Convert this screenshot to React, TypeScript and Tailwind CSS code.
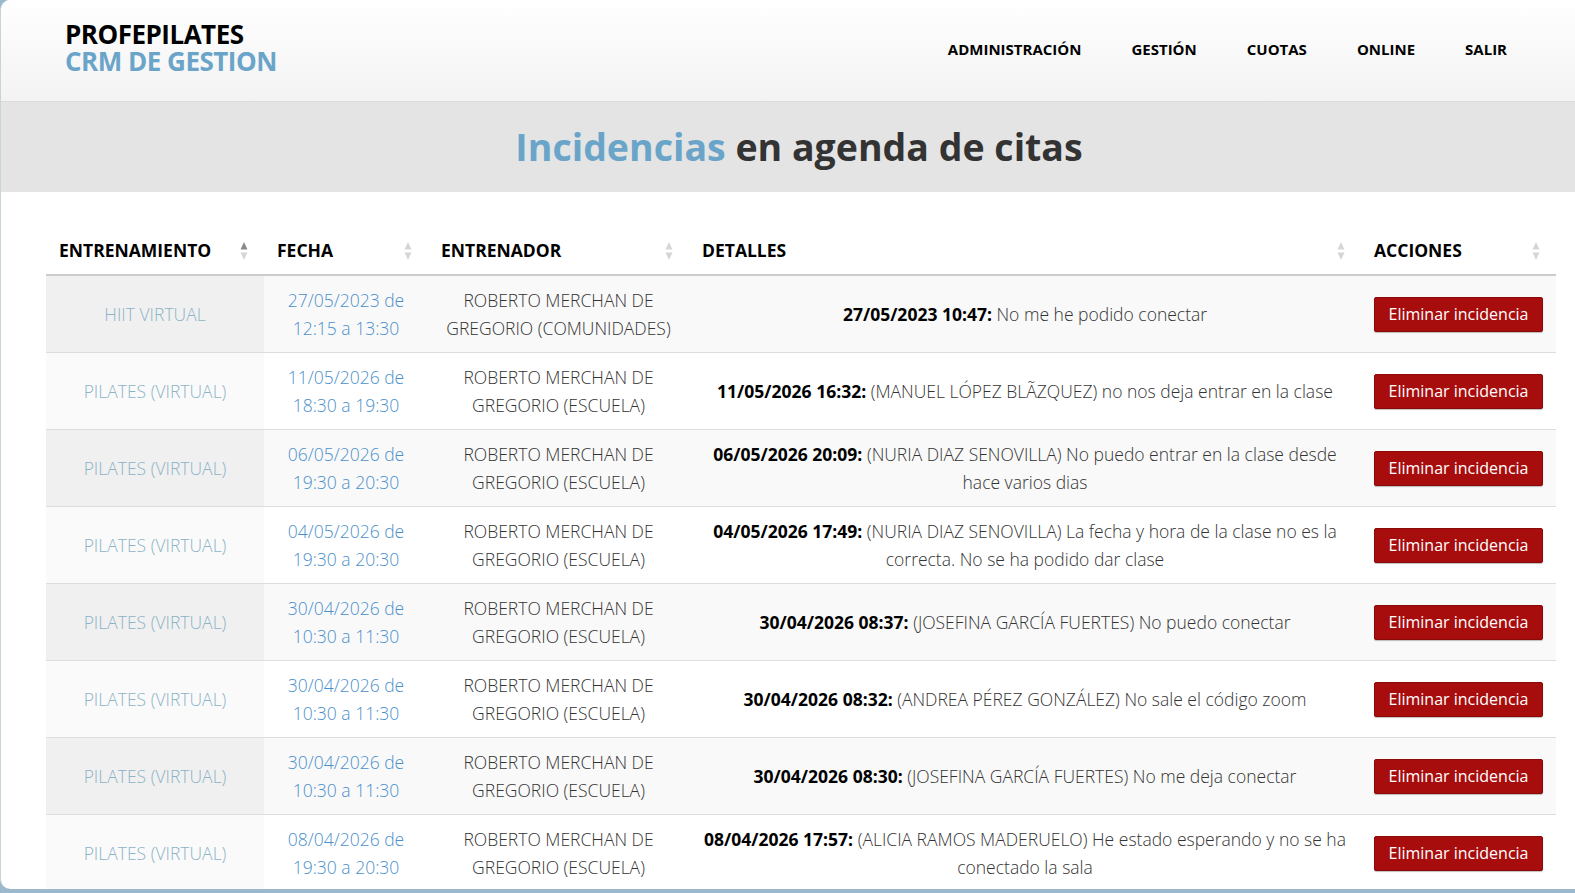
import { Fragment } from "react";

type Incidencia = {
  clase: string;
  fecha: string;
  horario: string;
  entrenador: string;
  registro: string;
  texto: string;
};

const incidencias: Incidencia[] = [
  {
    clase: "HIIT VIRTUAL",
    fecha: "27/05/2023 de",
    horario: "12:15 a 13:30",
    entrenador: "ROBERTO MERCHAN DE GREGORIO (COMUNIDADES)",
    registro: "27/05/2023 10:47:",
    texto: "No me he podido conectar",
  },
  {
    clase: "PILATES (VIRTUAL)",
    fecha: "11/05/2026 de",
    horario: "18:30 a 19:30",
    entrenador: "ROBERTO MERCHAN DE GREGORIO (ESCUELA)",
    registro: "11/05/2026 16:32:",
    texto: "(MANUEL LÓPEZ BLÃZQUEZ) no nos deja entrar en la clase",
  },
  {
    clase: "PILATES (VIRTUAL)",
    fecha: "06/05/2026 de",
    horario: "19:30 a 20:30",
    entrenador: "ROBERTO MERCHAN DE GREGORIO (ESCUELA)",
    registro: "06/05/2026 20:09:",
    texto: "(NURIA DIAZ SENOVILLA) No puedo entrar en la clase desde hace varios dias",
  },
  {
    clase: "PILATES (VIRTUAL)",
    fecha: "04/05/2026 de",
    horario: "19:30 a 20:30",
    entrenador: "ROBERTO MERCHAN DE GREGORIO (ESCUELA)",
    registro: "04/05/2026 17:49:",
    texto:
      "(NURIA DIAZ SENOVILLA) La fecha y hora de la clase no es la correcta. No se ha podido dar clase",
  },
  {
    clase: "PILATES (VIRTUAL)",
    fecha: "30/04/2026 de",
    horario: "10:30 a 11:30",
    entrenador: "ROBERTO MERCHAN DE GREGORIO (ESCUELA)",
    registro: "30/04/2026 08:37:",
    texto: "(JOSEFINA GARCÍA FUERTES) No puedo conectar",
  },
  {
    clase: "PILATES (VIRTUAL)",
    fecha: "30/04/2026 de",
    horario: "10:30 a 11:30",
    entrenador: "ROBERTO MERCHAN DE GREGORIO (ESCUELA)",
    registro: "30/04/2026 08:32:",
    texto: "(ANDREA PÉREZ GONZÁLEZ) No sale el código zoom",
  },
  {
    clase: "PILATES (VIRTUAL)",
    fecha: "30/04/2026 de",
    horario: "10:30 a 11:30",
    entrenador: "ROBERTO MERCHAN DE GREGORIO (ESCUELA)",
    registro: "30/04/2026 08:30:",
    texto: "(JOSEFINA GARCÍA FUERTES) No me deja conectar",
  },
  {
    clase: "PILATES (VIRTUAL)",
    fecha: "08/04/2026 de",
    horario: "19:30 a 20:30",
    entrenador: "ROBERTO MERCHAN DE GREGORIO (ESCUELA)",
    registro: "08/04/2026 17:57:",
    texto: "(ALICIA RAMOS MADERUELO) He estado esperando y no se ha conectado la sala",
  },
];

const menu = ["ADMINISTRACIÓN", "GESTIÓN", "CUOTAS", "ONLINE", "SALIR"];

function SortIcon({ active = false }: { active?: boolean }) {
  return (
    <svg width="8" height="20" viewBox="0 0 8 20" className="shrink-0">
      <path d="M4 1 L7.5 8.5 L0.5 8.5 Z" fill={active ? "#8a8a8a" : "#d6d6d6"} />
      <path d="M4 19 L7.5 11.5 L0.5 11.5 Z" fill="#d6d6d6" />
    </svg>
  );
}

function HeaderCell({ label, active }: { label: string; active?: boolean }) {
  return (
    <div className="flex items-center justify-between pl-[13px] pr-[16px]">
      <span className="text-[17.5px] font-bold text-black">{label}</span>
      <SortIcon active={active} />
    </div>
  );
}

export default function App() {
  return (
    <div className="h-[893px] w-[1575px] overflow-hidden bg-[#9bb8cd] font-['Open_Sans',sans-serif]">
      <div className="h-[889px] overflow-hidden rounded-l-[10px] border-l border-[#c9d3da] bg-white">
        {/* cabecera */}
        <header className="flex h-[102px] items-center justify-between border-b border-[#dcdcdc] bg-gradient-to-b from-white to-[#f3f3f3] pl-[64px] pr-[68px]">
          <div className="mb-[5px] flex flex-col text-[26px] font-bold leading-[27px] tracking-[-0.5px]">
            <span className="block h-[27px] text-black">PROFEPILATES</span>
            <span className="block h-[27px] text-[#6aa5c9]">CRM DE GESTION</span>
          </div>
          <nav className="mb-[2px] flex gap-[50px]">
            {menu.map((item) => (
              <a key={item} className="text-[15px] font-bold text-black">
                {item}
              </a>
            ))}
          </nav>
        </header>

        <div className="flex h-[90px] items-center justify-center bg-[#e4e4e4] pl-[22px]">
          <h1 className="text-[37.5px] font-bold text-[#333333]">
            <span className="text-[#6aa5c9]">Incidencias</span> en agenda de citas
          </h1>
        </div>

        {/* tabla de incidencias */}
        <div className="ml-[45px] mt-[35px] w-[1510px]">
          <div className="grid h-[49px] grid-cols-[218px_164px_261px_672px_195px] items-center border-b-2 border-[#cccccc]">
            <HeaderCell label="ENTRENAMIENTO" active />
            <HeaderCell label="FECHA" />
            <HeaderCell label="ENTRENADOR" />
            <HeaderCell label="DETALLES" />
            <HeaderCell label="ACCIONES" />
          </div>

          <div className="text-[17.5px] font-light leading-[28px]">
            {incidencias.map((row, i) => {
              const odd = i % 2 === 0;
              return (
                <Fragment key={i}>
                  <div
                    className={`grid h-[77px] grid-cols-[218px_164px_261px_672px_195px] border-b border-[#dddddd] text-center ${
                      odd ? "bg-[#f9f9f9]" : "bg-white"
                    }`}
                  >
                    <div
                      className={`flex items-center justify-center px-2 text-[#8db3c7] ${
                        odd ? "bg-[#f0f0f0]" : "bg-[#fafafa]"
                      }`}
                    >
                      {row.clase}
                    </div>
                    <div className="flex flex-col items-center justify-center text-[#4b90cc]">
                      <span>{row.fecha}</span>
                      <span>{row.horario}</span>
                    </div>
                    <div className="flex items-center justify-center px-[12px] text-[#333333]">
                      {row.entrenador}
                    </div>
                    <div className="flex items-center justify-center px-[12px] text-[#333333]">
                      <p>
                        <b className="font-bold text-black">{row.registro}</b> {row.texto}
                      </p>
                    </div>
                    <div className="flex items-center justify-center">
                      <button className="h-[35px] w-[169px] rounded-[2px] border border-[#8a0a0a] bg-[#a80d0d] text-[16px] font-normal text-white shadow-[0_1px_1px_rgba(0,0,0,0.25)]">
                        Eliminar incidencia
                      </button>
                    </div>
                  </div>
                </Fragment>
              );
            })}
          </div>
        </div>
      </div>
    </div>
  );
}
